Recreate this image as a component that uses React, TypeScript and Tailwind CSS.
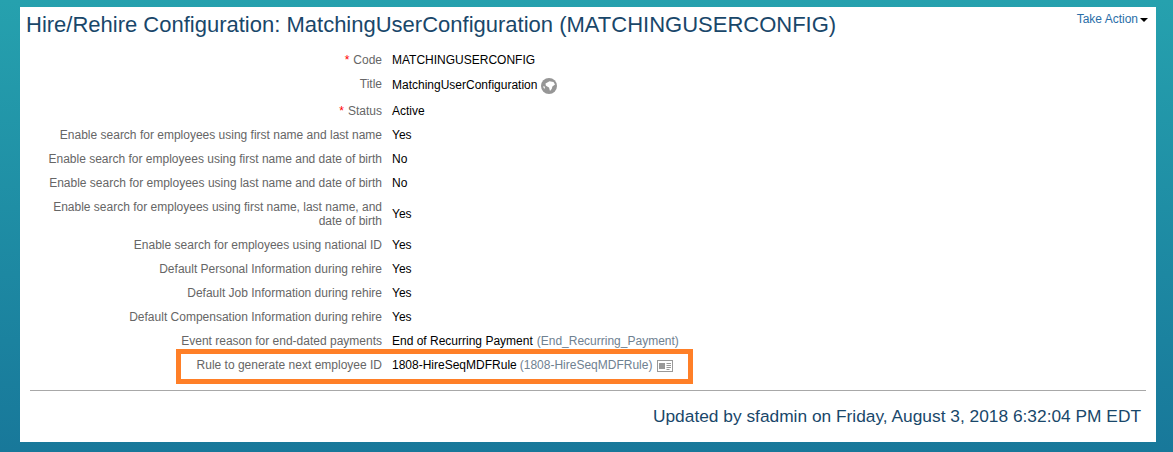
const ROWS: {
  label: string[];
  value: string;
  code?: string;
  required?: boolean;
  height: string;
}[] = [
  { label: ["Code"], value: "MATCHINGUSERCONFIG", required: true, height: "h-6" },
  { label: ["Title"], value: "MatchingUserConfiguration", height: "h-[27px]" },
  { label: ["Status"], value: "Active", required: true, height: "h-6" },
  { label: ["Enable search for employees using first name and last name"], value: "Yes", height: "h-6" },
  { label: ["Enable search for employees using first name and date of birth"], value: "No", height: "h-6" },
  { label: ["Enable search for employees using last name and date of birth"], value: "No", height: "h-6" },
  { label: ["Enable search for employees using first name, last name, and", "date of birth"], value: "Yes", height: "h-[38px]" },
  { label: ["Enable search for employees using national ID"], value: "Yes", height: "h-6" },
  { label: ["Default Personal Information during rehire"], value: "Yes", height: "h-6" },
  { label: ["Default Job Information during rehire"], value: "Yes", height: "h-6" },
  { label: ["Default Compensation Information during rehire"], value: "Yes", height: "h-6" },
  { label: ["Event reason for end-dated payments"], value: "End of Recurring Payment", code: "End_Recurring_Payment", height: "h-6" },
];

function GlobeIcon() {
  return (
    <svg viewBox="0 0 16 16" className="ml-1 mt-[3px] size-4" aria-hidden>
      <circle cx="8" cy="8" r="8" fill="#969696" />
      <path
        d="M4.5 5.5 8.5 3.2 12.5 4 14 6.6 11.4 8.4 10.8 10.8 9 13 8 9.6 6.2 8.4 4.8 7.4ZM2 8.6 3.4 8.2 4 10 3.2 10.8Z"
        fill="#fff"
      />
    </svg>
  );
}

function CardIcon() {
  return (
    <svg viewBox="0 0 16 12" className="ml-[5px] mt-[2px] h-3 w-4" aria-hidden>
      <rect x="0.5" y="0.5" width="15" height="11" fill="#fff" stroke="#999" />
      <rect x="2" y="3" width="6" height="6" fill="#999" />
      <path d="M9.5 3.5h4.5M9.5 5.5h4.5M9.5 7.5h4.5M9.5 9.5h3" stroke="#999" />
    </svg>
  );
}

function Label({ lines, required }: { lines: string[]; required?: boolean }) {
  return (
    <div className="text-right leading-[14px] text-[#666]">
      {lines.map((line, i) => (
        <div key={line}>
          {required && i === 0 && <span className="mr-1 text-[#f00]">*</span>}
          {line}
        </div>
      ))}
    </div>
  );
}

export default function App() {
  return (
    <div className="h-[452px] w-[1173px] overflow-hidden bg-gradient-to-b from-[#26a1ae] to-[#18789a] pl-5 pr-[17px] pt-[7px] font-['Liberation_Sans',Arial,sans-serif]">
      <div className="h-[435px] bg-white">
        <div className="flex items-start justify-between pl-[6px] pr-2">
          <h1 className="pt-[5px] text-[22px] leading-[26px] text-[#19476a]">
            Hire/Rehire Configuration: MatchingUserConfiguration (MATCHINGUSERCONFIG)
          </h1>
          <button className="flex items-center pt-[5px] text-xs leading-[14px] text-[#2a6ea8]">
            Take Action
            <span className="ml-[2px] mt-[1px] border-x-[4px] border-t-[4px] border-x-transparent border-t-black" />
          </button>
        </div>

        <div className="mt-[10px] text-xs">
          {ROWS.map((row) => (
            <div key={row.label[0]} className={`flex items-center ${row.height}`}>
              <div className={`w-[362px] shrink-0 ${row.label[0] === "Title" ? "pb-1" : ""}`}>
                <Label lines={row.label} required={row.required} />
              </div>
              <div className={`ml-[10px] flex items-center text-black ${row.label[0] === "Title" ? "pb-[2px]" : ""}`}>
                {row.value}
                {row.code && <span className="ml-1 text-[#6f8191]">({row.code})</span>}
                {row.label[0] === "Title" && <GlobeIcon />}
              </div>
            </div>
          ))}

          <div className="relative flex h-6 items-center">
            <div className="w-[362px] shrink-0">
              <Label lines={["Rule to generate next employee ID"]} />
            </div>
            <div className="ml-[10px] flex items-center text-black">
              1808-HireSeqMDFRule
              <span className="ml-[3px] text-[#6f8191]">(1808-HireSeqMDFRule)</span>
              <CardIcon />
            </div>
            <div className="absolute left-[156px] top-[-4px] h-[35px] w-[517px] border-[5px] border-[#ff7f27]" />
          </div>
        </div>

        <div className="mx-[10px] mt-[13px] border-t border-[#a8a8a8]" />
        <p className="mt-[14px] pr-[15px] text-right text-[17.33px] leading-[22px] text-[#19476a]">
          Updated by sfadmin on Friday, August 3, 2018 6:32:04 PM EDT
        </p>
      </div>
    </div>
  );
}
